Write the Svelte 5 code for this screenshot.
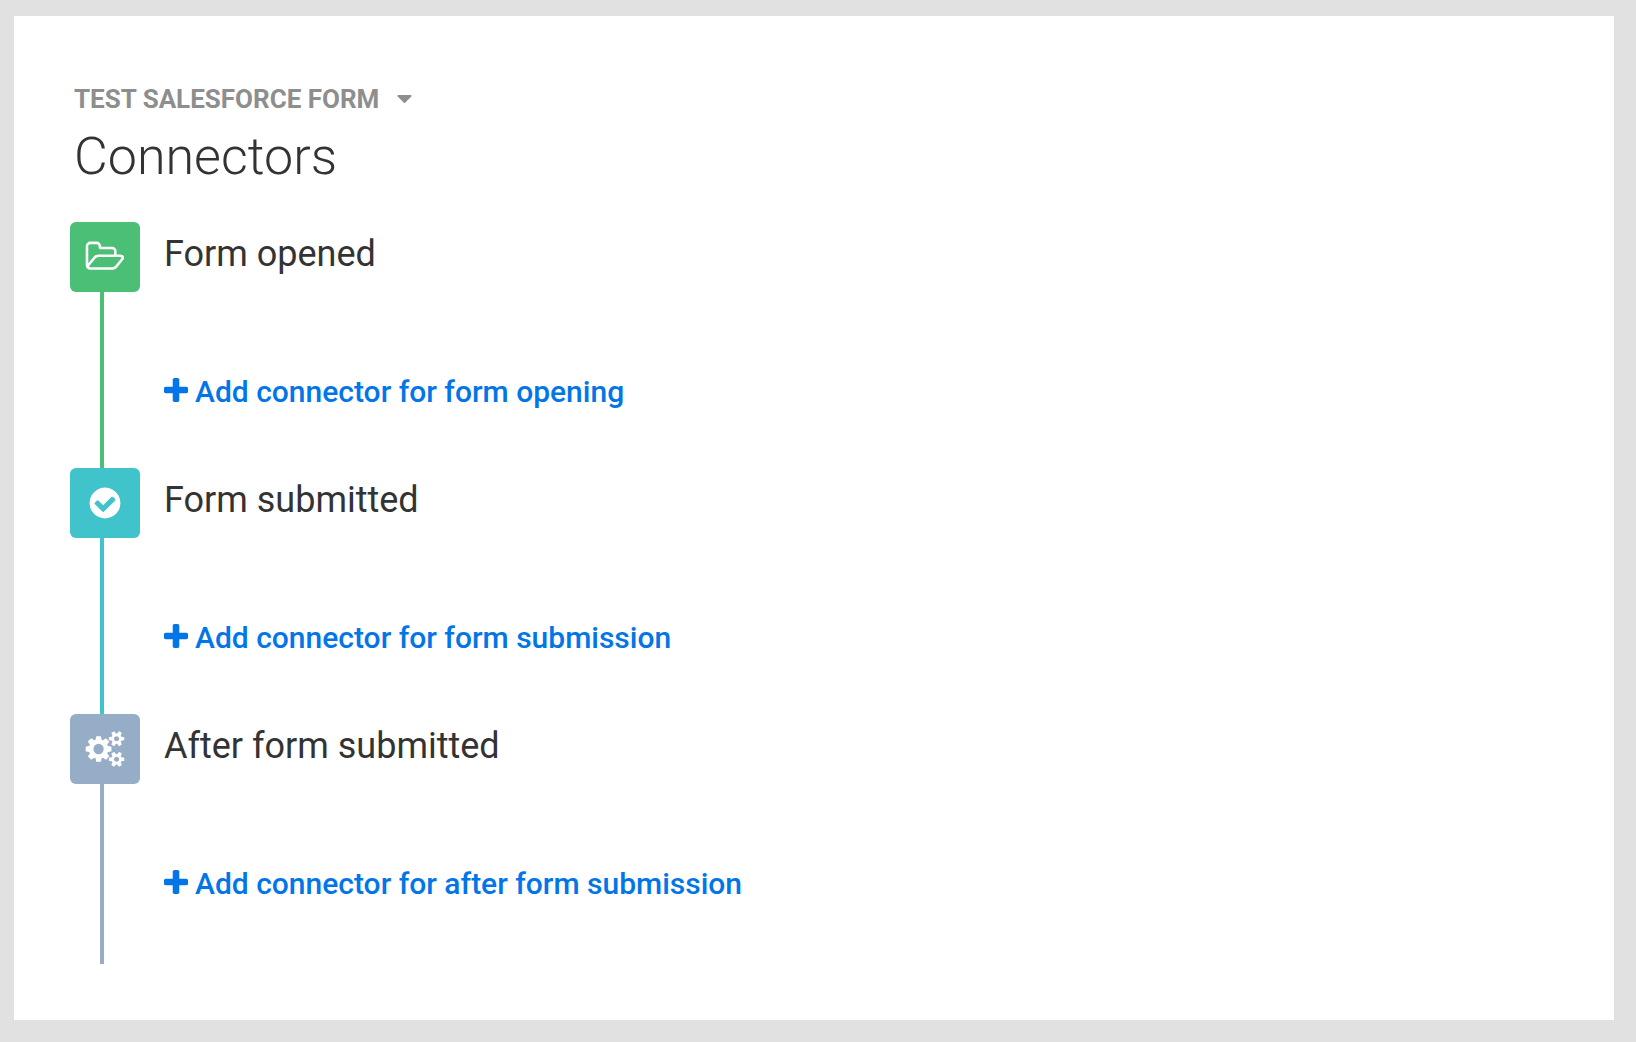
<script>
  const steps = [
    { id: 'opened', title: 'Form opened', action: 'Add connector for form opening' },
    { id: 'submitted', title: 'Form submitted', action: 'Add connector for form submission' },
    { id: 'after', title: 'After form submitted', action: 'Add connector for after form submission' },
  ];
</script>

<main class="page">
  <section class="card">
    <header>
      <button class="form-picker" type="button" aria-haspopup="true">
        <span>TEST SALESFORCE FORM</span>
        <svg class="caret" viewBox="384 640 1024 576" aria-hidden="true">
          <path d="M1408 704q0 26-19 45l-448 448q-19 19-45 19t-45-19l-448-448q-19-19-19-45t19-45 45-19h896q26 0 45 19t19 45z" />
        </svg>
      </button>
      <h1>Connectors</h1>
    </header>

    <ol class="steps">
      {#each steps as step (step.id)}
        <li class="step {step.id}">
          <div class="rail">
            <div class="badge">
              {#if step.id === 'opened'}
                <svg class="wide" viewBox="0 0 2048 1792" aria-hidden="true">
                  <path d="M1845 931q0-35-53-35h-1088q-40 0-85.500 21.500t-71.500 52.500l-294 363q-18 24-18 40 0 35 53 35h1088q40 0 86-22t71-53l294-363q18-22 18-39zm-1141-163h768v-160q0-40-28-68t-68-28h-576q-40 0-68-28t-28-68v-64q0-40-28-68t-68-28h-320q-40 0-68 28t-28 68v853l256-315q44-53 116-87.500t140-34.500zm1269 163q0 62-46 120l-295 363q-43 53-116 87.500t-140 34.500h-1088q-92 0-158-66t-66-158v-960q0-92 66-158t158-66h320q92 0 158 66t66 158v32h544q92 0 158 66t66 158v160h192q54 0 99 24.500t67 70.500q15 32 15 68z" />
                </svg>
              {:else if step.id === 'submitted'}
                <svg viewBox="0 0 1792 1792" aria-hidden="true">
                  <path d="M1412 734q0-28-18-46l-91-90q-19-19-45-19t-45 19l-408 407-226-226q-19-19-45-19t-45 19l-91 90q-18 18-18 46 0 27 18 45l362 362q19 19 45 19 27 0 46-19l543-543q18-18 18-45zm252 162q0 209-103 385.500t-279.500 279.500-385.500 103-385.500-103-279.500-279.500-103-385.500 103-385.500 279.500-279.500 385.500-103 385.500 103 279.500 279.500 103 385.500z" />
                </svg>
              {:else}
                <svg class="wide" viewBox="0 0 2048 1792" aria-hidden="true">
                  <path d="M960 896q0-106-75-181t-181-75-181 75-75 181 75 181 181 75 181-75 75-181zm768 512q0-52-38-90t-90-38-90 38-38 90q0 53 37.500 90.500t90.500 37.500 90.500-37.500 37.500-90.500zm0-1024q0-52-38-90t-90-38-90 38-38 90q0 53 37.500 90.500t90.500 37.500 90.500-37.500 37.500-90.500zm-384 421v185q0 10-7 19.500t-16 10.500l-155 24q-11 35-32 76 34 48 90 115 7 11 7 20 0 12-7 19-23 30-82.500 89.500t-78.500 59.500q-11 0-21-7l-115-90q-37 19-77 31-11 108-23 155-7 24-30 24h-186q-11 0-20-7.500t-10-17.500l-23-153q-34-10-75-31l-118 89q-7 7-20 7-11 0-21-8-144-133-144-160 0-9 7-19 10-14 41-53t47-61q-23-44-35-82l-152-24q-10-1-17-9.500t-7-19.500v-185q0-10 7-19.500t16-10.500l155-24q11-35 32-76-34-48-90-115-7-11-7-20 0-12 7-20 22-30 82-89t79-59q11 0 21 7l115 90q34-18 77-32 11-108 23-154 7-24 30-24h186q11 0 20 7.500t10 17.500l23 153q34 10 75 31l118-89q8-7 20-7 11 0 21 8 144 133 144 160 0 8-7 19-12 16-42 54t-45 60q23 48 34 82l152 23q10 2 17 10.500t7 19.500zm640 533v140q0 16-149 31-12 27-30 52 51 113 51 138 0 4-4 7-122 71-124 71-8 0-46-47t-52-68q-20 2-30 2t-30-2q-14 21-52 68t-46 47q-2 0-124-71-4-3-4-7 0-25 51-138-18-25-30-52-149-15-149-31v-140q0-16 149-31 13-29 30-52-51-113-51-138 0-4 4-7 4-2 35-20t59-34 30-16q8 0 46 46.500t52 67.500q20-2 30-2t30 2q51-71 92-112l6-2q4 0 124 70 4 3 4 7 0 25-51 138 17 23 30 52 149 15 149 31zm0-1024v140q0 16-149 31-12 27-30 52 51 113 51 138 0 4-4 7-122 71-124 71-8 0-46-47t-52-68q-20 2-30 2t-30-2q-14 21-52 68t-46 47q-2 0-124-71-4-3-4-7 0-25 51-138-18-25-30-52-149-15-149-31v-140q0-16 149-31 13-29 30-52-51-113-51-138 0-4 4-7 4-2 35-20t59-34 30-16q8 0 46 46.500t52 67.500q20-2 30-2t30 2q51-71 92-112l6-2q4 0 124 70 4 3 4 7 0 25-51 138 17 23 30 52 149 15 149 31z" />
                </svg>
              {/if}
            </div>
            <div class="line"></div>
          </div>
          <div class="body">
            <h2>{step.title}</h2>
            <a class="add" href="#{step.id}">
              <svg viewBox="192 128 1408 1408" aria-hidden="true">
                <path d="M1600 736v192q0 40-28 68t-68 28h-416v416q0 40-28 68t-68 28h-192q-40 0-68-28t-28-68v-416h-416q-40 0-68-28t-28-68v-192q0-40 28-68t68-28h416v-416q0-40 28-68t68-28h192q40 0 68 28t28 68v416h416q40 0 68 28t28 68z" />
              </svg>
              <span>{step.action}</span>
            </a>
          </div>
        </li>
      {/each}
    </ol>
  </section>
</main>

<style>
  .page {
    display: flex;
    min-height: 100vh;
    box-sizing: border-box;
    padding: 16px 22px 22px 14px;
    background: #e1e1e1;
    font-family: Roboto, 'Liberation Sans', sans-serif;
    color: #333;
  }

  .card {
    flex: 1;
    box-sizing: border-box;
    padding: 64px 56px 56px;
    background: #fff;
  }

  header {
    padding-left: 4px;
  }

  .form-picker {
    display: flex;
    align-items: center;
    gap: 18px;
    padding: 0;
    border: none;
    background: none;
    color: #8e8e8e;
    font-family: inherit;
    font-size: 26px;
    font-weight: 700;
    line-height: 38px;
    cursor: pointer;
  }

  svg {
    display: block;
    flex: none;
    fill: currentColor;
  }

  .caret {
    width: 15px;
    height: 8px;
  }

  h1 {
    margin: 8px 0 0;
    font-size: 52px;
    font-weight: 300;
    line-height: 62px;
  }

  .steps {
    margin: 34px 0 0;
    padding: 0;
    list-style: none;
  }

  .step {
    display: flex;
    gap: 24px;
    min-height: 246px;
  }

  .step:last-child {
    min-height: 250px;
  }

  .opened {
    --accent: #4bbf75;
  }

  .submitted {
    --accent: #41c3cc;
  }

  .after {
    --accent: #96adc7;
  }

  .rail {
    display: flex;
    flex-direction: column;
    width: 70px;
  }

  .badge {
    display: flex;
    align-items: center;
    justify-content: center;
    height: 70px;
    border-radius: 6px;
    background: var(--accent);
    color: #fff;
  }

  .badge svg {
    width: 36px;
    height: 36px;
  }

  .badge .wide {
    width: 42px;
  }

  .line {
    flex: 1;
    width: 4px;
    margin-left: 30px;
    background: var(--accent);
  }

  .body {
    display: flex;
    flex-direction: column;
    align-items: flex-start;
    gap: 86px;
  }

  h2 {
    margin: 0;
    font-size: 36px;
    font-weight: 400;
    line-height: 64px;
  }

  .add {
    display: flex;
    align-items: baseline;
    gap: 7px;
    color: #0275e8;
    font-size: 30px;
    font-weight: 500;
    line-height: 40px;
    text-decoration: none;
  }

  .add:hover {
    text-decoration: underline;
  }

  .add svg {
    width: 24px;
    height: 24px;
  }
</style>
